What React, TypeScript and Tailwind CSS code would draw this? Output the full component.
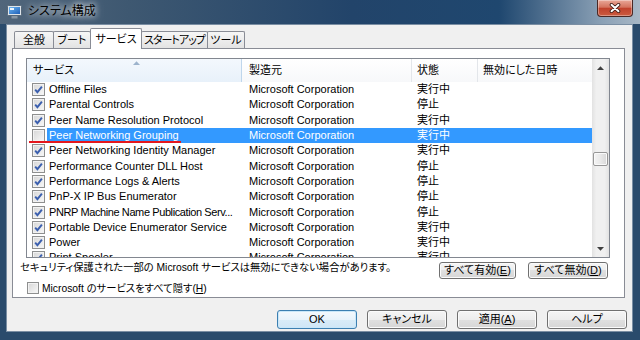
import clsx from 'clsx';

const FONT = "font-['Liberation_Sans','Noto_Sans_CJK_JP',sans-serif] [font-feature-settings:'palt']";

type Service = { name: string; status: string; on: boolean; selected?: boolean; tight?: boolean };

const services: Service[] = [
  { name: 'Offline Files', status: '実行中', on: true },
  { name: 'Parental Controls', status: '停止', on: true },
  { name: 'Peer Name Resolution Protocol', status: '実行中', on: true },
  { name: 'Peer Networking Grouping', status: '実行中', on: false, selected: true },
  { name: 'Peer Networking Identity Manager', status: '実行中', on: true },
  { name: 'Performance Counter DLL Host', status: '停止', on: true },
  { name: 'Performance Logs & Alerts', status: '停止', on: true },
  { name: 'PnP-X IP Bus Enumerator', status: '停止', on: true },
  { name: 'PNRP Machine Name Publication Serv...', status: '停止', on: true, tight: true },
  { name: 'Portable Device Enumerator Service', status: '実行中', on: true },
  { name: 'Power', status: '実行中', on: true },
  { name: 'Print Spooler', status: '実行中', on: true },
];

const tabs = [
  { label: '全般', w: 'w-[40px]' },
  { label: 'ブート', w: 'w-[38px]' },
  { label: 'サービス', w: 'w-[52px]', active: true },
  { label: 'スタートアップ', w: 'w-[67px]', tight: true },
  { label: 'ツール', w: 'w-[38px]' },
];

const Check = ({ on, size = 'w-[13px] h-[13px]' }: { on: boolean; size?: string }) => (
  <div className={clsx(size, 'shrink-0 border border-[#8e8f8f] bg-[linear-gradient(135deg,#d6d6d6,#f8f8f8)] shadow-[inset_0_0_0_1px_#f2f2f2] flex items-center justify-center')}>
    {on && (
      <svg width="11" height="11" viewBox="0 0 11 11">
        <path d="M2.2 5.6 L4.4 8.2 L8.9 2.6" fill="none" stroke="#3b5fae" strokeWidth="1.9" />
      </svg>
    )}
  </div>
);

const Btn = ({ children, focus, className }: { children: React.ReactNode; focus?: boolean; className?: string }) => (
  <div
    className={clsx(
      'flex items-center justify-center rounded-[3px] border text-[11px] leading-none text-black whitespace-nowrap',
      focus
        ? 'border-[#3c7fb1] shadow-[inset_0_0_0_1px_#c9e7f9] bg-[linear-gradient(180deg,#f4f9fd_0%,#e8f3fb_50%,#d9ecf8_50%,#cfe6f6_100%)]'
        : 'border-[#707070] shadow-[inset_0_0_0_1px_#fbfbfb] bg-[linear-gradient(180deg,#f5f5f5_0%,#ededed_50%,#e0e0e0_50%,#d6d6d6_100%)]',
      className,
    )}
  >
    {children}
  </div>
);

const Arrow = ({ down }: { down?: boolean }) => (
  <svg width="7" height="4" viewBox="0 0 7 4" className={down ? 'rotate-180' : ''}>
    <path d="M0 4 L3.5 0.3 L7 4 Z" fill="#3f3f3f" />
  </svg>
);

export default function App() {
  return (
    <div className={clsx('w-[640px] h-[340px] flex flex-col overflow-hidden bg-[#2a4b6c]', FONT)}>
      {/* title bar */}
      <div className="h-[24px] flex items-start bg-[linear-gradient(90deg,#51667b_0%,#3e5871_20%,#22446a_55%,#1f476f_78%,#8aa0b5_94%,#a9b8c6_100%)]">
        <svg width="15" height="14" viewBox="0 0 15 14" className="mt-[5px] ml-[7px] shrink-0">
          <defs>
            <linearGradient id="scr" x1="0" y1="0" x2="1" y2="1">
              <stop offset="0" stopColor="#6cb6f2" />
              <stop offset="1" stopColor="#1f5fb8" />
            </linearGradient>
          </defs>
          <rect x="0.5" y="0.5" width="14" height="10" rx="1" fill="#dfe5ea" stroke="#56687a" />
          <rect x="2" y="2" width="11" height="7" fill="url(#scr)" />
          <rect x="3" y="3" width="4" height="2" fill="#e8f4ff" />
          <rect x="4.5" y="11" width="6" height="2.5" fill="#8896a4" />
        </svg>
        <span className="ml-[6px] mt-[4px] text-[12px] leading-[15px] text-black [text-shadow:0_0_6px_#ffffff,0_0_10px_rgba(255,255,255,0.7)]">
          システム構成
        </span>
        <div className="ml-auto mr-[7px] w-[36px] h-[17px] rounded-b-[4px] border border-t-0 border-[#4a2824] bg-[linear-gradient(180deg,#e9a898_0%,#d4735e_45%,#c0422c_52%,#cb5b3f_100%)] shadow-[inset_0_0_0_1px_rgba(255,255,255,0.35)] flex items-center justify-center">
          <svg width="12" height="10" viewBox="0 0 12 10">
            <path d="M2.5 1.8 L9.5 8.2 M9.5 1.8 L2.5 8.2" stroke="#3c1b16" strokeWidth="3.6" strokeLinecap="round" />
            <path d="M2.5 1.8 L9.5 8.2 M9.5 1.8 L2.5 8.2" stroke="#ffffff" strokeWidth="2" strokeLinecap="round" />
          </svg>
        </div>
      </div>

      {/* client area */}
      <div className="h-[308px] ml-[6px] mr-[7px] bg-[#f0f0f0] border border-[#7a8ea3] flex flex-col pl-[5px]">
        {/* tabs */}
        <div className="mt-[3px] h-[20px] flex items-end pl-[2px]">
          {tabs.map((t, i) => (
            <div
              key={t.label}
              className={clsx(
                t.w,
                'shrink-0 flex items-center justify-center whitespace-nowrap text-[11px] leading-none text-black border border-b-0 border-[#898c95] rounded-t-[2px]',
                i > 0 && '-ml-px',
                t.tight && 'tracking-[-1px]',
                t.active
                  ? 'h-[21px] -mb-px relative z-10 bg-white'
                  : 'h-[17px] bg-[linear-gradient(180deg,#f6f6f6_0%,#ededed_50%,#e3e3e3_100%)]',
              )}
            >
              {t.label}
            </div>
          ))}
        </div>

        {/* tab panel */}
        <div className="w-[613px] h-[250px] bg-white border border-[#898c95] flex flex-col text-[11px] text-black">
          {/* list view */}
          <div className="ml-[13px] mt-[9px] w-[584px] h-[200px] border border-[#828790] flex leading-[13px]">
            <div className="flex-1 flex flex-col min-w-0">
              <div className="h-[23px] flex shrink-0">
                <div className="w-[215px] relative pl-[6px] flex items-center border-r border-[#bfd6ec] bg-[linear-gradient(180deg,#f3f8fd_0%,#e8f1fa_100%)]">
                  サービス
                  <svg width="7" height="4" viewBox="0 0 7 4" className="absolute top-[2px] left-[106px]">
                    <path d="M0 4 L3.5 0.3 L7 4 Z" fill="#9cb3cc" />
                  </svg>
                </div>
                <div className="w-[170px] pl-[7px] flex items-center border-r border-[#e3e6ea] bg-[linear-gradient(180deg,#ffffff_0%,#f7f8fa_100%)]">製造元</div>
                <div className="w-[66px] pl-[5px] flex items-center border-r border-[#e3e6ea] bg-[linear-gradient(180deg,#ffffff_0%,#f7f8fa_100%)]">状態</div>
                <div className="flex-1 pl-[5px] flex items-center bg-[linear-gradient(180deg,#ffffff_0%,#f7f8fa_100%)]">無効にした日時</div>
              </div>
              <div className="flex-1 overflow-hidden">
                {services.map(s => (
                  <div key={s.name} className="h-[15.3px] flex relative">
                    <div className="w-[20px] shrink-0 flex items-center pl-[5px]">
                      <Check on={s.on} />
                    </div>
                    <div className={clsx('flex-1 flex items-center whitespace-nowrap', s.selected && 'bg-[#3399ff] text-white')}>
                      <div className={clsx('w-[195px] pl-[2px] overflow-hidden', s.tight && 'tracking-[-0.4px]')}>{s.name}</div>
                      <div className="w-[170px] pl-[7px]">Microsoft Corporation</div>
                      <div className="w-[66px] pl-[5px]">{s.status}</div>
                      <div className="flex-1" />
                    </div>
                    {s.selected && <div className="absolute left-[2px] bottom-0 w-[152px] h-[2px] bg-[#e4171d]" />}
                  </div>
                ))}
              </div>
            </div>
            {/* scrollbar */}
            <div className="w-[17px] shrink-0 flex flex-col bg-[linear-gradient(90deg,#e2e2e2_0%,#f0f0f0_25%,#f0f0f0_75%,#e2e2e2_100%)]">
              <div className="h-[17px] flex items-center justify-center"><Arrow /></div>
              <div className="flex-1 pt-[76px] px-[1px]">
                <div className="h-[14px] rounded-[2px] border border-[#979797] bg-[linear-gradient(90deg,#f4f4f4_0%,#e9e9e9_50%,#d8d8d8_100%)] shadow-[inset_0_0_0_1px_#fafafa]" />
              </div>
              <div className="h-[17px] flex items-center justify-center"><Arrow down /></div>
            </div>
          </div>

          {/* note + enable/disable buttons */}
          <div className="mt-[3px] h-[19px] flex items-start pl-[7px] pr-[16px]">
            <span className="text-[10.3px] leading-[13px] whitespace-nowrap">セキュリティ保護された一部の Microsoft サービスは無効にできない場合があります。</span>
            <div className="ml-auto mt-[1px] flex gap-[12px]">
              <Btn className="w-[77px] h-[17px]">すべて有効(<u>E</u>)</Btn>
              <Btn className="w-[80px] h-[17px]">すべて無効(<u>D</u>)</Btn>
            </div>
          </div>

          {/* hide microsoft services */}
          <div className="mt-[1px] h-[14px] pl-[14px] flex items-center gap-[3px]">
            <Check on={false} size="w-[12px] h-[12px]" />
            <span className="text-[10.3px] leading-[13px] whitespace-nowrap">Microsoft のサービスをすべて隠す(<u>H</u>)</span>
          </div>
        </div>

        {/* dialog buttons */}
        <div className="mt-[12px] flex justify-end gap-[10px] pr-[5px]">
          <Btn focus className="w-[80px] h-[19px]">OK</Btn>
          <Btn className="w-[80px] h-[19px]">キャンセル</Btn>
          <Btn className="w-[80px] h-[19px]">適用(<u>A</u>)</Btn>
          <Btn className="w-[80px] h-[19px]">ヘルプ</Btn>
        </div>
      </div>
    </div>
  );
}
